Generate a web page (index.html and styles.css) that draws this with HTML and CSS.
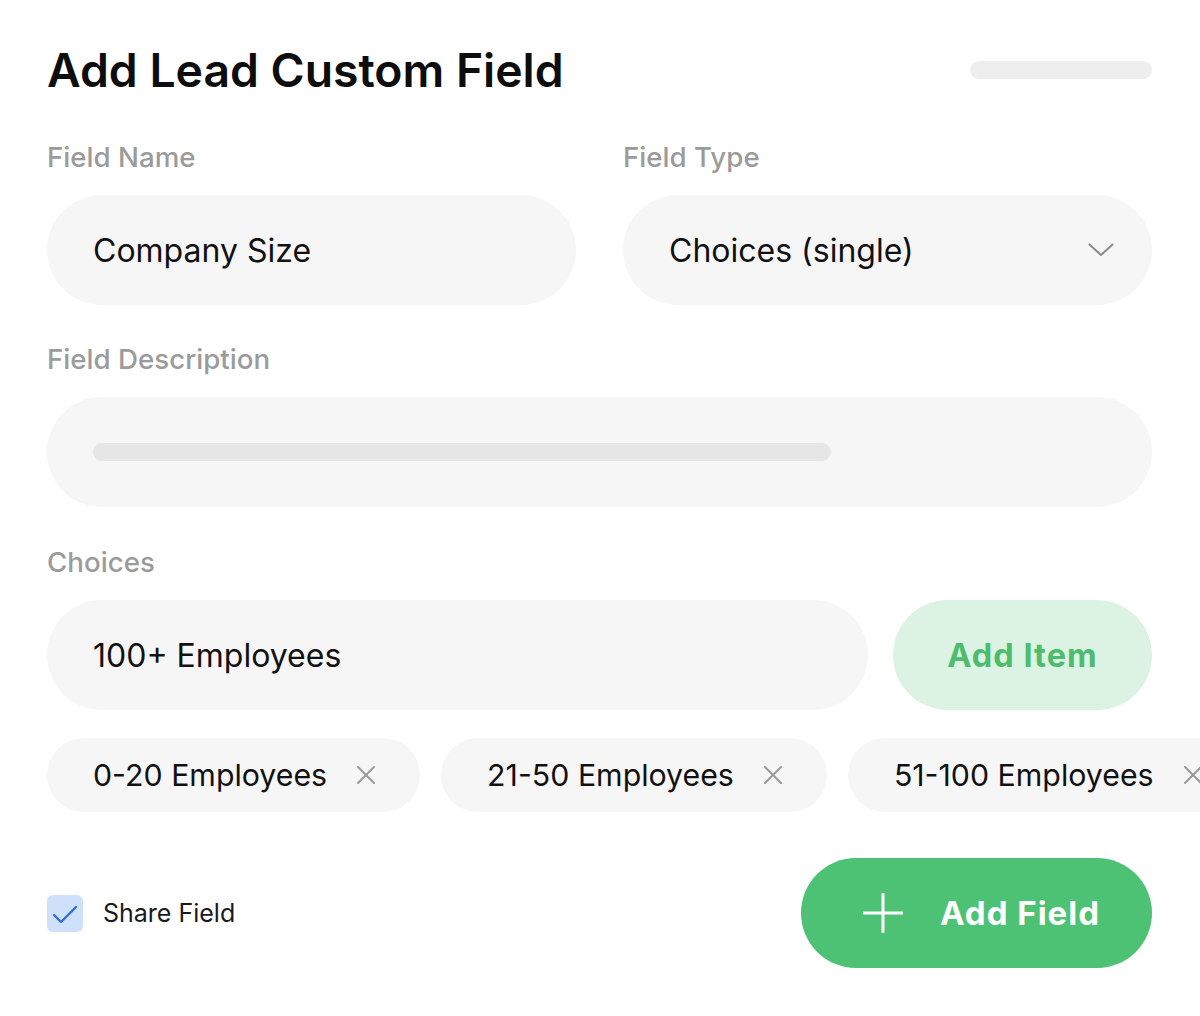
FILE: index.html
```html
<!DOCTYPE html>
<html lang="en">
<head>
<meta charset="utf-8">
<title>Add Lead Custom Field</title>
<link rel="stylesheet" href="styles.css">
</head>
<body>
<div class="page">
  <header class="head">
    <h1 class="title">Add Lead Custom Field</h1>
    <div class="skeleton skeleton-head"></div>
  </header>

  <div class="row two">
    <div class="field">
      <div class="label">Field Name</div>
      <div class="input"><span class="value">Company Size</span></div>
    </div>
    <div class="field">
      <div class="label">Field Type</div>
      <div class="input select">
        <span class="value">Choices (single)</span>
        <svg class="chev" width="26" height="14" viewBox="0 0 26 14"><path d="M1.5 1.5 L13 12 L24.5 1.5" fill="none" stroke="#8a8a8a" stroke-width="2" stroke-linecap="round" stroke-linejoin="round"/></svg>
      </div>
    </div>
  </div>

  <div class="field block desc">
    <div class="label">Field Description</div>
    <div class="input"><div class="skeleton skeleton-desc"></div></div>
  </div>

  <div class="field block choices">
    <div class="label">Choices</div>
    <div class="choice-row">
      <div class="input grow"><span class="value">100+ Employees</span></div>
      <button class="btn-soft">Add Item</button>
    </div>
  </div>

  <div class="chips">
    <div class="chip"><span>0-20 Employees</span><svg class="x" width="20" height="20" viewBox="0 0 20 20"><path d="M2 2 L18 18 M18 2 L2 18" stroke="#9a9a9a" stroke-width="2" stroke-linecap="round"/></svg></div>
    <div class="chip"><span>21-50 Employees</span><svg class="x" width="20" height="20" viewBox="0 0 20 20"><path d="M2 2 L18 18 M18 2 L2 18" stroke="#9a9a9a" stroke-width="2" stroke-linecap="round"/></svg></div>
    <div class="chip"><span>51-100 Employees</span><svg class="x" width="20" height="20" viewBox="0 0 20 20"><path d="M2 2 L18 18 M18 2 L2 18" stroke="#9a9a9a" stroke-width="2" stroke-linecap="round"/></svg></div>
  </div>

  <footer class="foot">
    <label class="check">
      <span class="box"><svg width="26" height="20" viewBox="0 0 26 20"><path d="M2 10 L9 17 L24 2" fill="none" stroke="#2f6fd8" stroke-width="2.4" stroke-linecap="round" stroke-linejoin="round"/></svg></span>
      <span class="check-text">Share Field</span>
    </label>
    <button class="btn-primary">
      <svg width="40" height="40" viewBox="0 0 40 40"><path d="M20 1 V39 M1 20 H39" stroke="#ffffff" stroke-width="3" stroke-linecap="round"/></svg>
      <span>Add Field</span>
    </button>
  </footer>
</div>
</body>
</html>
```

FILE: styles.css
```css
html, body {
  margin: 0;
  padding: 0;
  background: #ffffff;
  overflow: hidden;
}

body {
  font-family: Inter, "Noto Sans", "Liberation Sans", sans-serif;
  color: #111111;
}

.page {
  width: 1200px;
  box-sizing: border-box;
  padding: 42px 48px 0 47px;
  overflow: hidden;
}

.head {
  display: flex;
  justify-content: space-between;
  align-items: center;
  height: 56px;
}

.title {
  margin: 0;
  font-size: 46.3px;
  line-height: 56px;
  font-weight: 600;
  letter-spacing: 0;
  color: #0d0d0d;
}

.skeleton {
  background: #eeeeee;
  border-radius: 9px;
}

.skeleton-head {
  width: 182px;
  height: 18px;
}

.row.two {
  display: grid;
  grid-template-columns: 1fr 1fr;
  column-gap: 47px;
  margin-top: 42px;
}

.field {
  display: flex;
  flex-direction: column;
  gap: 21px;
}

.field.desc {
  margin-top: 37px;
}

.field.choices {
  margin-top: 38px;
}

.label {
  font-size: 27.7px;
  line-height: 34px;
  font-weight: 500;
  color: #9b9b9b;
}

.input {
  height: 110px;
  border-radius: 55px;
  background: #f7f6f6;
  display: flex;
  align-items: center;
  padding: 0 46px;
  box-sizing: border-box;
}

.value {
  font-size: 32px;
  font-weight: 400;
  color: #111111;
}

.select {
  justify-content: space-between;
  padding-right: 38px;
}

.chev {
  display: block;
}

.skeleton-desc {
  width: 738px;
  height: 18px;
  background: #e7e6e6;
}

.choice-row {
  display: flex;
  gap: 25px;
}

.grow {
  flex: 1;
}

.btn-soft {
  width: 259px;
  height: 110px;
  border: none;
  border-radius: 55px;
  background: #dcf2e3;
  color: #4dbd6d;
  font-family: inherit;
  font-size: 32.5px;
  font-weight: 700;
  letter-spacing: 1px;
  padding: 0;
}

.chips {
  display: flex;
  flex-wrap: nowrap;
  gap: 21px;
  margin-top: 28px;
}

.chip {
  flex: none;
  display: flex;
  align-items: center;
  gap: 29px;
  height: 74px;
  padding: 0 44px 0 46px;
  border-radius: 37px;
  background: #f7f6f6;
  font-size: 30.3px;
  color: #111111;
}

.chip .x {
  display: block;
}

.foot {
  display: flex;
  justify-content: space-between;
  align-items: center;
  margin-top: 46px;
}

.check {
  display: flex;
  align-items: center;
  gap: 20px;
}

.box {
  width: 36px;
  height: 37px;
  border-radius: 6px;
  background: #cfe0fb;
  display: flex;
  align-items: center;
  justify-content: center;
  padding-top: 3px;
  box-sizing: border-box;
}

.box svg {
  display: block;
}

.check-text {
  font-size: 25px;
  color: #1a1a1a;
}

.btn-primary {
  height: 110px;
  border: none;
  border-radius: 55px;
  background: #4ec274;
  color: #ffffff;
  display: flex;
  align-items: center;
  gap: 37px;
  padding: 0 52px 0 62px;
  font-family: inherit;
  font-size: 33px;
  font-weight: 700;
  letter-spacing: 1px;
}

.btn-primary svg {
  display: block;
}
```
